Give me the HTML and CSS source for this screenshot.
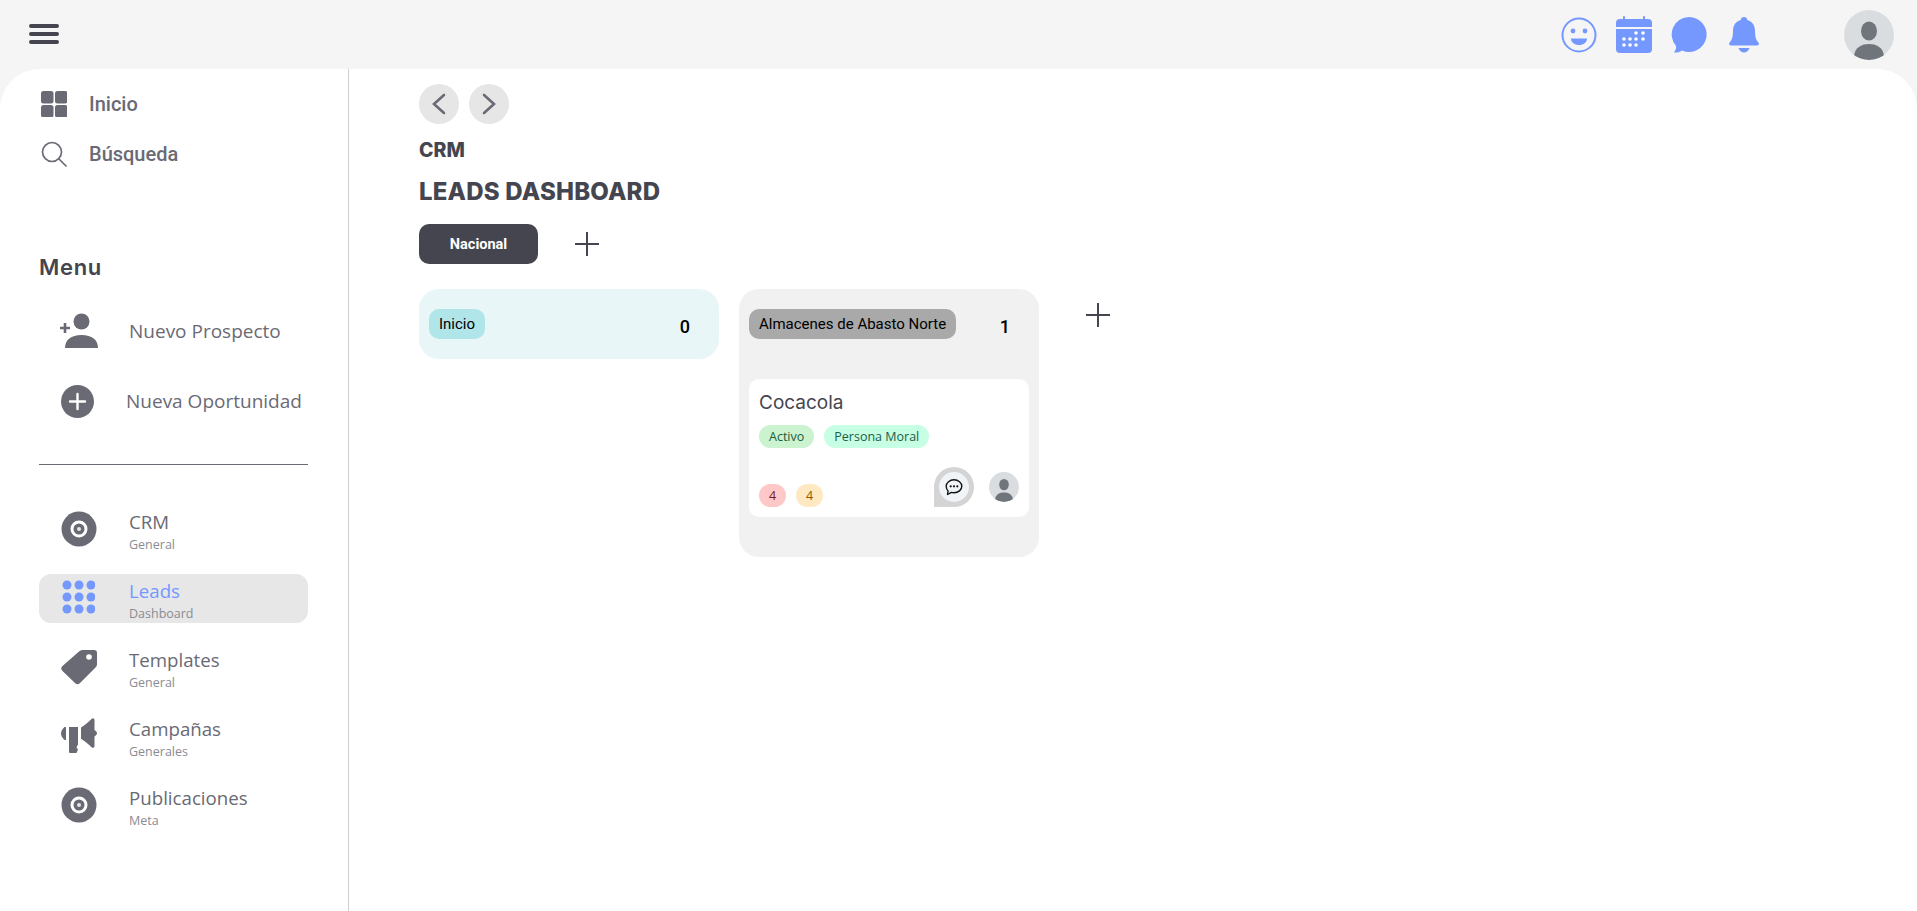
FILE: index.html
```html
<!DOCTYPE html>
<html lang="es">
<head>
    <meta charset="UTF-8">
    <title>Leads Dashboard</title>
    <link rel="stylesheet" href="styles.css">
</head>
<body>

    <header class="topbar">
        <svg class="burger" width="30" height="20" viewBox="0 0 30 20"><path d="M2 2h26M2 10h26M2 18h26" stroke="#45454f" stroke-width="4" stroke-linecap="round"/></svg>
        <div class="top-icons">
            <svg class="ic-face" width="36" height="36" viewBox="0 0 36 36"><circle cx="18" cy="18" r="16.5" fill="none" stroke="#7598ff" stroke-width="2"/><circle cx="12" cy="14" r="2.4" fill="#7598ff"/><circle cx="24" cy="14" r="2.4" fill="#7598ff"/><path d="M10 21.5h16c0 4-3.6 6.5-8 6.5s-8-2.500-8-6.500z" fill="#7598ff"/></svg>
            <svg class="ic-cal" width="36" height="37" viewBox="0 0 36 37"><path d="M8 1v4M28 1v4" stroke="#7598ff" stroke-width="2" stroke-linecap="round"/><path d="M4 3h28a4 4 0 0 1 4 4v4H0V7a4 4 0 0 1 4-4z" fill="#7598ff"/><path d="M0 13h36v20a4 4 0 0 1-4 4H4a4 4 0 0 1-4-4z" fill="#7598ff"/><g fill="#fff"><circle cx="20" cy="17" r="1.800"/><circle cx="27" cy="17" r="1.800"/><circle cx="8" cy="23" r="1.800"/><circle cx="14" cy="23" r="1.800"/><circle cx="20" cy="23" r="1.800"/><circle cx="27" cy="23" r="1.800"/><circle cx="8" cy="29" r="1.800"/><circle cx="14" cy="29" r="1.800"/><circle cx="20" cy="29" r="1.800"/></g></svg>
            <svg class="ic-chat" width="36" height="36" viewBox="0 0 36 36"><path d="M18 0a17.500 17.500 0 1 1-7 33.500C9.500 34.800 6 36 3 35.500c1.600-2 2.300-4 2-6.500A17.500 17.500 0 0 1 18 0z" fill="#7598ff"/></svg>
            <svg class="ic-bell" width="30" height="36" viewBox="0 0 30 36"><path d="M15 0c2 0 3 1.300 3.300 3C23.500 4.500 26 8.500 26 14c0 6 1 9 3.400 11.500 1 1.100.4 3-1.400 3H2c-1.800 0-2.400-1.900-1.400-3C3 23 4 20 4 14 4 8.500 6.500 4.500 11.700 3 12 1.300 13 0 15 0z" fill="#7598ff"/><path d="M9.500 31h11c-1 2.800-3 4.500-5.500 4.500S10.500 33.800 9.500 31z" fill="#7598ff"/></svg>
            <div class="avatar avatar-big">
                <svg width="50" height="50" viewBox="0 0 50 50"><ellipse cx="25" cy="21" rx="8" ry="9.500" fill="#6f757b"/><path d="M10 46c1-9 8-12 15-12s14 3 15 12c-4 3-9 4-15 4s-11-1-15-4z" fill="#6f757b"/></svg>
            </div>
        </div>
    </header>

    <div class="page">
        <aside class="sidebar">
            <a class="quick">
                <svg width="26" height="26" viewBox="0 0 26 26" fill="#6a6a75"><rect width="12.500" height="12.500" rx="2.500"/><rect x="14" width="12.500" height="12.500" rx="2.500"/><rect y="14" width="12.500" height="12.500" rx="2.500"/><rect x="14" y="14" width="12.500" height="12.500" rx="2.500"/></svg>
                <span>Inicio</span>
            </a>
            <a class="quick">
                <svg width="26" height="26" viewBox="0 0 26 26" fill="none" stroke="#6a6a75" stroke-width="1.700" stroke-linecap="round"><circle cx="11" cy="11" r="9.500"/><path d="M18 18l7 7"/></svg>
                <span>Búsqueda</span>
            </a>

            <h3 class="menu-title">Menu</h3>

            <a class="action">
                <span class="action-icon">
                    <svg width="38" height="36" viewBox="0 0 38 36" fill="#6a6a75"><circle cx="21.500" cy="8.500" r="8"/><path d="M5 35c0-8 6-13 16.500-13S38 27 38 35z"/><path d="M0 15h10M5 10v10" stroke="#6a6a75" stroke-width="2.600" fill="none"/></svg>
                </span>
                <span class="action-text">Nuevo Prospecto</span>
            </a>
            <a class="action action-alt">
                <span class="action-icon">
                    <svg width="33" height="33" viewBox="0 0 33 33"><circle cx="16.500" cy="16.500" r="16.500" fill="#6a6a75"/><path d="M16.500 9v15M9 16.500h15" stroke="#fff" stroke-width="2.400" stroke-linecap="round"/></svg>
                </span>
                <span class="action-text">Nueva Oportunidad</span>
            </a>

            <hr class="divider">

            <nav class="modules">
                <a class="module">
                    <span class="module-icon">
                        <svg width="36" height="36" viewBox="0 0 36 36"><circle cx="18" cy="18" r="17.500" fill="#6a6a75"/><circle cx="18" cy="18" r="7" fill="none" stroke="#fff" stroke-width="3"/><circle cx="18" cy="18" r="2" fill="#e6e6e9"/></svg>
                    </span>
                    <span class="module-text"><b>CRM</b><small>General</small></span>
                </a>
                <a class="module active">
                    <span class="module-icon">
                        <svg width="34" height="34" viewBox="0 0 34 34" fill="#7598ff"><circle cx="6" cy="5" r="4.500"/><circle cx="18" cy="5" r="4.500"/><circle cx="30" cy="5" r="4.500"/><circle cx="6" cy="17" r="4.500"/><circle cx="18" cy="17" r="4.500"/><circle cx="30" cy="17" r="4.500"/><circle cx="6" cy="29" r="4.500"/><circle cx="18" cy="29" r="4.500"/><circle cx="30" cy="29" r="4.500"/></svg>
                    </span>
                    <span class="module-text"><b>Leads</b><small>Dashboard</small></span>
                </a>
                <a class="module">
                    <span class="module-icon">
                        <svg width="36" height="36" viewBox="0 0 36 36"><path d="M23 1h10a3 3 0 0 1 3 3v11c0 1.500-.5 2.500-1.500 3.500L19 34a3.500 3.500 0 0 1-5 0L1.500 22a3.500 3.500 0 0 1 0-5L18 2.500C19.500 1.300 21 1 23 1z" fill="#6a6a75"/><circle cx="28" cy="8" r="2.800" fill="#fff"/></svg>
                    </span>
                    <span class="module-text"><b>Templates</b><small>General</small></span>
                </a>
                <a class="module">
                    <span class="module-icon">
                        <svg width="36" height="36" viewBox="0 0 36 36" fill="#6a6a75"><path d="M3.500 9H5v13H3.500C1.500 20 0 18 0 15.500S1.500 11 3.500 9z"/><path d="M8 9h9v18h-.5l-1 2.500 1.500 2-1.500 3.500H9.500C8.500 35 8 34.500 8 33.500z"/><path d="M20 9.500c3.500-2 7-5 10.500-8.500 1.500-1.300 3-.6 3 1.200v9.800c1.300.9 2.500 2 2.500 3.200s-1.200 2.300-2.500 3.200v9.600c0 1.800-1.500 2.500-3 1.200-3.500-3.500-7-6.500-10.500-8.500z"/></svg>
                    </span>
                    <span class="module-text"><b>Campañas</b><small>Generales</small></span>
                </a>
                <a class="module">
                    <span class="module-icon">
                        <svg width="36" height="36" viewBox="0 0 36 36"><circle cx="18" cy="18" r="17.500" fill="#6a6a75"/><circle cx="18" cy="18" r="7" fill="none" stroke="#fff" stroke-width="3"/><circle cx="18" cy="18" r="2" fill="#e6e6e9"/></svg>
                    </span>
                    <span class="module-text"><b>Publicaciones</b><small>Meta</small></span>
                </a>
            </nav>
        </aside>

        <main class="content">
            <div class="history">
                <button class="round-btn"><svg width="16" height="22" viewBox="0 0 16 22"><path d="M13 2L3 11l10 9" fill="none" stroke="#6a6a75" stroke-width="2.600" stroke-linecap="round"/></svg></button>
                <button class="round-btn"><svg width="16" height="22" viewBox="0 0 16 22"><path d="M3 2l10 9-10 9" fill="none" stroke="#6a6a75" stroke-width="2.600" stroke-linecap="round"/></svg></button>
            </div>
            <h2 class="crumb">CRM</h2>
            <h1 class="page-title">LEADS DASHBOARD</h1>

            <div class="tabs">
                <button class="tab">Nacional</button>
                <svg class="plus" width="24" height="24" viewBox="0 0 24 24"><path d="M12 0v24M0 12h24" stroke="#45454f" stroke-width="2"/></svg>
            </div>

            <div class="board">
                <section class="column column-start">
                    <div class="column-head">
                        <span class="stage stage-start">Inicio</span>
                        <span class="count">0</span>
                    </div>
                </section>

                <section class="column column-stock">
                    <div class="column-head">
                        <span class="stage stage-stock">Almacenes de Abasto Norte</span>
                        <span class="count">1</span>
                    </div>
                    <article class="lead-card">
                        <h4>Cocacola</h4>
                        <div class="tags">
                            <span class="tag tag-green">Activo</span>
                            <span class="tag tag-mint">Persona Moral</span>
                        </div>
                        <div class="card-foot">
                            <span class="num num-red">4</span>
                            <span class="num num-yellow">4</span>
                            <span class="bubble">
                                <span class="bubble-in">
                                    <svg width="18" height="18" viewBox="0 0 18 18"><path d="M9 1.800c4.300 0 7.800 2.900 7.800 6.500s-3.500 6.500-7.800 6.500c-.9 0-1.800-.1-2.600-.4L2.500 16.500l.6-3.600C1.900 11.800 1.200 10.100 1.200 8.300c0-3.600 3.500-6.500 7.800-6.500z" fill="none" stroke="#111" stroke-width="1.400" stroke-linejoin="round"/><circle cx="5.700" cy="8.300" r="1.100" fill="#111"/><circle cx="9" cy="8.300" r="1.100" fill="#111"/><circle cx="12.300" cy="8.300" r="1.100" fill="#111"/></svg>
                                </span>
                            </span>
                            <span class="avatar avatar-small">
                                <svg width="30" height="30" viewBox="0 0 50 50"><ellipse cx="25" cy="21" rx="8" ry="9.500" fill="#6f757b"/><path d="M10 46c1-9 8-12 15-12s14 3 15 12c-4 3-9 4-15 4s-11-1-15-4z" fill="#6f757b"/></svg>
                            </span>
                        </div>
                    </article>
                </section>

                <svg class="plus plus-column" width="24" height="24" viewBox="0 0 24 24"><path d="M12 0v24M0 12h24" stroke="#45454f" stroke-width="2"/></svg>
            </div>
        </main>
    </div>

</body>
</html>
```

FILE: styles.css
```css
* {
    box-sizing: border-box;
}
body {
    margin: 0;
    height: 911px;
    overflow: hidden;
    background-color: #f5f5f5;
    font-family: "Open Sans", sans-serif;
}
.topbar {
    height: 69px;
    display: flex;
    align-items: center;
    justify-content: space-between;
    padding: 0 23px 0 29px;
}
.burger {
    margin-top: -1px;
}
.top-icons {
    display: flex;
    align-items: center;
}
.ic-face {
    margin-right: 19px;
}
.ic-cal {
    margin-right: 19px;
}
.ic-chat {
    margin-right: 22px;
}
.ic-bell {
    margin-right: 85px;
}
.avatar {
    display: block;
    border-radius: 50%;
    background-color: #dadde0;
    overflow: hidden;
}
.avatar svg {
    display: block;
}
.avatar-big {
    width: 50px;
    height: 50px;
}
.avatar-small {
    width: 30px;
    height: 30px;
    margin-left: 5px;
    margin-bottom: 5px;
}
.page {
    height: 842px;
    display: flex;
    background-color: #fff;
    border-radius: 40px 40px 0 0;
}
.sidebar {
    width: 349px;
    flex-shrink: 0;
    border-right: 1px solid #cfcfcf;
    padding: 10px 40px 0 39px;
}
.quick {
    height: 50px;
    display: flex;
    align-items: center;
    gap: 22px;
    padding-left: 2px;
    font-family: Roboto, sans-serif;
    font-weight: 500;
    font-size: 20px;
    color: #6a6a75;
}
.menu-title {
    margin: 73px 0 0;
    height: 30px;
    line-height: 30px;
    font-family: Inter, sans-serif;
    font-size: 22px;
    letter-spacing: .7px;
    font-weight: 600;
    color: #45454f;
}
.action {
    height: 70px;
    display: flex;
    align-items: center;
    font-size: 19px;
    color: #6a6a75;
}
.menu-title + .action {
    margin-top: 14px;
}
.action-icon {
    width: 90px;
    padding-left: 21px;
    display: flex;
}
.action-alt .action-icon {
    width: 87px;
    padding-left: 22px;
}
.divider {
    margin: 28px 0 40px;
    border: none;
    border-top: 1px solid #6a6a75;
}
.modules {
    display: flex;
    flex-direction: column;
    gap: 20px;
}
.module {
    height: 49px;
    display: flex;
    border-radius: 12px;
}
.module.active {
    background-color: #e7e7e7;
}
.module-icon {
    width: 90px;
    padding: 6px 0 0 22px;
}
.module-icon svg {
    display: block;
}
.module-text {
    display: flex;
    flex-direction: column;
    color: #6a6a75;
}
.module-text b {
    font-weight: 400;
    font-size: 18.7px;
    line-height: 27px;
    margin-top: 3px;
}
.module-text small {
    font-size: 12.5px;
    line-height: 17px;
    margin-top: 1px;
    color: #8b8b93;
}
.active .module-text b {
    color: #7598ff;
}
.content {
    flex: 1;
    padding: 15px 0 0 70px;
}
.history {
    display: flex;
    gap: 10px;
}
.round-btn {
    width: 40px;
    height: 40px;
    padding: 0;
    border: none;
    border-radius: 50%;
    background-color: #e6e6e6;
    display: flex;
    align-items: center;
    justify-content: center;
}
.crumb {
    margin: 14px 0 0;
    font-family: Inter, sans-serif;
    font-size: 19.5px;
    line-height: 24px;
    font-weight: 800;
    color: #45454f;
}
.page-title {
    margin: 15px 0 0;
    font-family: Inter, sans-serif;
    font-size: 24px;
    letter-spacing: .2px;
    line-height: 30px;
    font-weight: 800;
    color: #45454f;
}
.tabs {
    display: flex;
    align-items: center;
    margin-top: 17px;
}
.tab {
    width: 119px;
    height: 40px;
    border: none;
    border-radius: 10px;
    background-color: #45454f;
    color: #fff;
    font-family: Roboto, sans-serif;
    font-weight: 700;
    font-size: 14.5px;
}
.tabs .plus {
    margin-left: 37px;
}
.board {
    display: flex;
    align-items: flex-start;
    gap: 20px;
    margin-top: 25px;
}
.column {
    width: 300px;
    border-radius: 20px;
    padding: 20px 10px;
}
.column-start {
    height: 70px;
    background-color: #e8f6f8;
}
.column-stock {
    height: 268px;
    background-color: #f1f1f1;
}
.column-head {
    display: flex;
    align-items: center;
}
.stage {
    height: 30px;
    line-height: 30px;
    padding: 0 10px;
    border-radius: 10px;
    font-family: Roboto, sans-serif;
    font-size: 15px;
    color: #000;
}
.stage-start {
    background-color: #b0e5ea;
}
.stage-stock {
    background-color: #a9a9a9;
}
.count {
    margin-left: auto;
    margin-top: 4px;
    margin-right: 19px;
    font-family: Roboto, sans-serif;
    font-weight: 500;
    font-size: 18px;
    color: #000;
}
.lead-card {
    height: 138px;
    margin-top: 40px;
    padding: 12px 10px 10px;
    border-radius: 10px;
    background-color: #fff;
    display: flex;
    flex-direction: column;
}
.lead-card h4 {
    margin: 0;
    font-family: Inter, sans-serif;
    font-weight: 400;
    font-size: 19px;
    line-height: 24px;
    color: #45454f;
}
.tags {
    display: flex;
    gap: 10px;
    margin-top: 10px;
}
.tag,
.num {
    height: 23px;
    line-height: 23px;
    border-radius: 12px;
    font-size: 12.5px;
    text-align: center;
}
.tag {
    padding: 0 10px;
}
.tag-green {
    background-color: #ccf3cf;
    color: #1b5e3a;
}
.tag-mint {
    background-color: #c6ffe3;
    color: #1b5e4a;
}
.card-foot {
    margin-top: auto;
    display: flex;
    align-items: flex-end;
    gap: 10px;
}
.num {
    width: 27px;
}
.num-red {
    background-color: #ffc8c8;
    color: #7a1f1f;
}
.num-yellow {
    background-color: #ffe9c2;
    color: #8a5a00;
}
.bubble {
    width: 40px;
    height: 40px;
    margin-left: auto;
    border-radius: 50% 50% 50% 0;
    background-color: #d4d4d4;
    display: flex;
    align-items: center;
    justify-content: center;
}
.bubble-in {
    width: 30px;
    height: 30px;
    border-radius: 50%;
    background-color: #f0f3f7;
    display: flex;
    align-items: center;
    justify-content: center;
}
.plus-column {
    margin: 14px 0 0 27px;
}
```
